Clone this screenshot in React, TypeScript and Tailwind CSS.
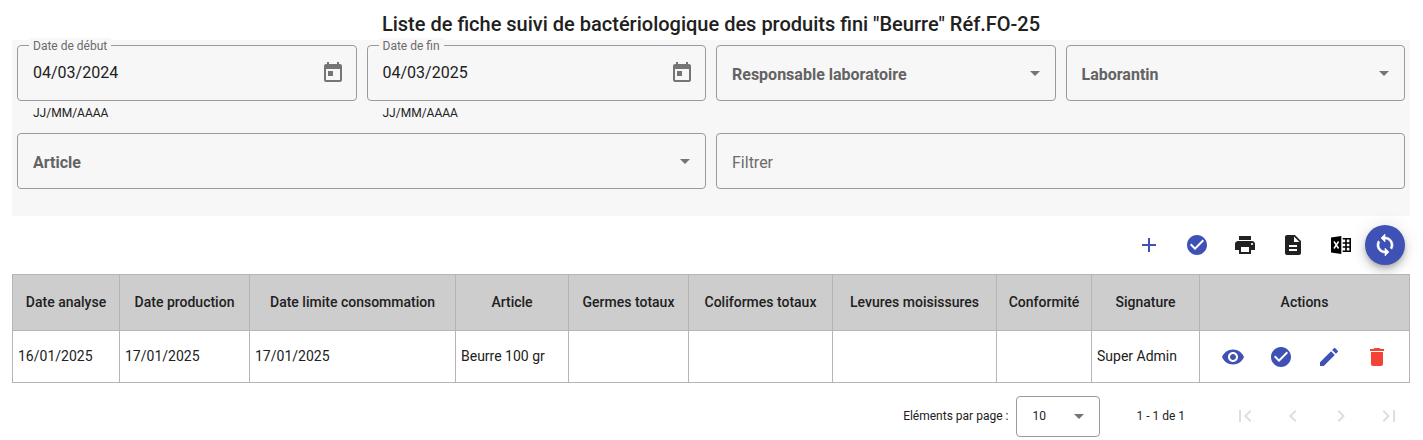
import { useState } from "react";
import type { ReactNode } from "react";
import {
  MdAdd,
  MdCheckCircle,
  MdChevronLeft,
  MdChevronRight,
  MdDelete,
  MdDescription,
  MdEdit,
  MdFirstPage,
  MdLastPage,
  MdPrint,
  MdToday,
  MdVisibility,
} from "react-icons/md";

const box = "h-14 w-full rounded border border-[#9a9a9a] bg-transparent px-[15px] text-base outline-none";

function DateField({ id, label, initial }: { id: string; label: string; initial: string }) {
  const [value, setValue] = useState(initial);
  return (
    <div className="h-[78px]">
      <div className="relative">
        <label htmlFor={id} className="absolute -top-[7px] left-3 bg-[#f7f7f7] px-1 text-xs leading-4 text-[#6b6b6b]">
          {label}
        </label>
        <input id={id} value={value} onChange={(e) => setValue(e.target.value)} className={box + " pb-0.5 text-[#212121]"} />
        <button
          type="button"
          aria-label={"Ouvrir le calendrier : " + label}
          className="absolute top-2 right-1 flex size-10 items-center justify-center text-[#757575]"
        >
          <MdToday size={24} />
        </button>
      </div>
      <p className="px-4 pt-1 text-xs leading-4 text-[#212121]">JJ/MM/AAAA</p>
    </div>
  );
}

function Caret() {
  return (
    <svg viewBox="0 0 10 5" className="h-[5px] w-2.5 fill-[#757575]" aria-hidden="true">
      <path d="M0 0h10L5 5z" />
    </svg>
  );
}

function SelectField({ label }: { label: string }) {
  return (
    <div className="relative h-14">
      <select aria-label={label} className={box + " appearance-none pt-1 font-bold text-[#636363]"}>
        <option>{label}</option>
      </select>
      <span className="pointer-events-none absolute inset-y-0 right-4 flex items-center">
        <Caret />
      </span>
    </div>
  );
}

function ExcelIcon() {
  return (
    <svg viewBox="0 0 20 20" className="size-5" aria-hidden="true">
      <path d="M0 2.4 10.3 1v18L0 17.6z" fill="#000" />
      <path d="m3 6.5 4.6 7M7.6 6.5 3 13.5" stroke="#fff" strokeWidth="1.5" fill="none" />
      <path d="M11.7 3.8h7.500v12.400h-7.500M11.700 8h7.500M11.700 12h7.500M15 3.800v12.400" stroke="#000" strokeWidth="1.6" fill="none" />
    </svg>
  );
}

function LoopIcon() {
  return (
    <svg viewBox="0 0 24 24" className="size-6 fill-current stroke-current" strokeWidth="0.6" aria-hidden="true">
      <path d="M12 4V1L8 5l4 4V6c3.31 0 6 2.69 6 6 0 1.01-.25 1.97-.7 2.8l1.46 1.46C19.54 15.03 20 13.57 20 12c0-4.42-3.58-8-8-8zm0 14c-3.31 0-6-2.69-6-6 0-1.01.25-1.97.7-2.8L5.240 7.740C4.460 8.970 4 10.430 4 12c0 4.420 3.580 8 8 8v3l4-4-4-4v3z" />
    </svg>
  );
}

function IconButton({ label, color, disabled, children }: { label: string; color: string; disabled?: boolean; children: ReactNode }) {
  return (
    <button type="button" aria-label={label} title={label} disabled={disabled} className={"flex size-12 items-center justify-center " + color}>
      {children}
    </button>
  );
}

const columns = [
  { title: "Date analyse", width: "w-[107px]" },
  { title: "Date production", width: "w-[130px]" },
  { title: "Date limite consommation", width: "w-[206px]" },
  { title: "Article", width: "w-[113px]" },
  { title: "Germes totaux", width: "w-[120px]" },
  { title: "Coliformes totaux", width: "w-[144px]" },
  { title: "Levures moisissures", width: "w-[164px]" },
  { title: "Conformité", width: "w-[95px]" },
  { title: "Signature", width: "w-[108px]" },
  { title: "Actions", width: "w-[210px]" },
];

const rows = [["16/01/2025", "17/01/2025", "17/01/2025", "Beurre 100 gr", "", "", "", "", "Super Admin"]];

export default function App() {
  return (
    <main className="bg-white pt-2 font-['Roboto',sans-serif] text-[#212121]">
      <section className="pr-[13px] pl-3">
        <h1 className="text-center text-xl leading-8 font-medium">
          Liste de fiche suivi de bactériologique des produits fini "Beurre" Réf.FO-25
        </h1>

        <form className="grid grid-cols-4 gap-2.5 bg-[#f7f7f7] px-[5px] pt-[5px] pb-[27px]">
          <DateField id="debut" label="Date de début" initial="04/03/2024" />
          <DateField id="fin" label="Date de fin" initial="04/03/2025" />
          <SelectField label="Responsable laboratoire" />
          <SelectField label="Laborantin" />
          <div className="col-span-2">
            <SelectField label="Article" />
          </div>
          <div className="col-span-2">
            <input aria-label="Filtrer" placeholder="Filtrer" className={box + " pt-0.5 text-[#212121] placeholder:text-[#6b6b6b]"} />
          </div>
        </form>

        <div className="flex items-center justify-end py-[5px] pr-[5px]">
          <IconButton label="Ajouter" color="text-[#3f51b5]"><MdAdd size={24} /></IconButton>
          <IconButton label="Valider" color="text-[#3f51b5]"><MdCheckCircle size={24} /></IconButton>
          <IconButton label="Imprimer" color="text-[#212121]"><MdPrint size={24} /></IconButton>
          <IconButton label="Exporter en document" color="text-[#212121]"><MdDescription size={24} /></IconButton>
          <IconButton label="Exporter vers Excel" color="text-black"><ExcelIcon /></IconButton>
          <button
            type="button"
            aria-label="Actualiser"
            className="flex size-10 items-center justify-center rounded-full bg-[#3f51b5] text-white shadow-[0_3px_5px_-1px_rgba(0,0,0,0.2),0_6px_10px_rgba(0,0,0,0.14),0_1px_18px_rgba(0,0,0,0.12)]"
          >
            <LoopIcon />
          </button>
        </div>

        <table className="relative w-full table-fixed border-collapse text-sm">
          <thead>
            <tr className="h-14 bg-[#cdcdcd]">
              {columns.map((c) => (
                <th key={c.title} scope="col" className={"border border-[#b5b5b5] pb-0.5 font-medium " + c.width}>
                  {c.title}
                </th>
              ))}
            </tr>
          </thead>
          <tbody>
            {rows.map((row, r) => (
              <tr key={r} className="h-[52px]">
                {row.map((cell, i) => (
                  <td key={i} className="border border-[#b5b5b5] px-[5px] pb-0.5">{cell}</td>
                ))}
                <td className="border border-[#b5b5b5] p-0">
                  <div className="flex justify-center">
                    <IconButton label="Voir" color="text-[#3f51b5]"><MdVisibility size={24} /></IconButton>
                    <IconButton label="Valider" color="text-[#3f51b5]"><MdCheckCircle size={24} /></IconButton>
                    <IconButton label="Modifier" color="text-[#3f51b5]"><MdEdit size={24} /></IconButton>
                    <IconButton label="Supprimer" color="text-[#f44336]"><MdDelete size={24} /></IconButton>
                  </div>
                </td>
              </tr>
            ))}
          </tbody>
        </table>
      </section>

      <nav aria-label="Pagination" className="flex items-center justify-end pt-[9px] pr-2.5 text-xs">
        <label htmlFor="page-size" className="pr-2">Eléments par page :</label>
        <div className="relative">
          <select id="page-size" className="h-[41px] w-[84px] appearance-none rounded border border-[#9a9a9a] bg-white px-[15px] outline-none">
            <option>10</option>
          </select>
          <span className="pointer-events-none absolute inset-y-0 right-4 flex items-center">
            <Caret />
          </span>
        </div>
        <span className="px-9">1 - 1 de 1</span>
        <IconButton label="Première page" disabled color="text-[#dedede]"><MdFirstPage size={24} /></IconButton>
        <IconButton label="Page précédente" disabled color="text-[#dedede]"><MdChevronLeft size={24} /></IconButton>
        <IconButton label="Page suivante" disabled color="text-[#dedede]"><MdChevronRight size={24} /></IconButton>
        <IconButton label="Dernière page" disabled color="text-[#dedede]"><MdLastPage size={24} /></IconButton>
      </nav>
    </main>
  );
}
